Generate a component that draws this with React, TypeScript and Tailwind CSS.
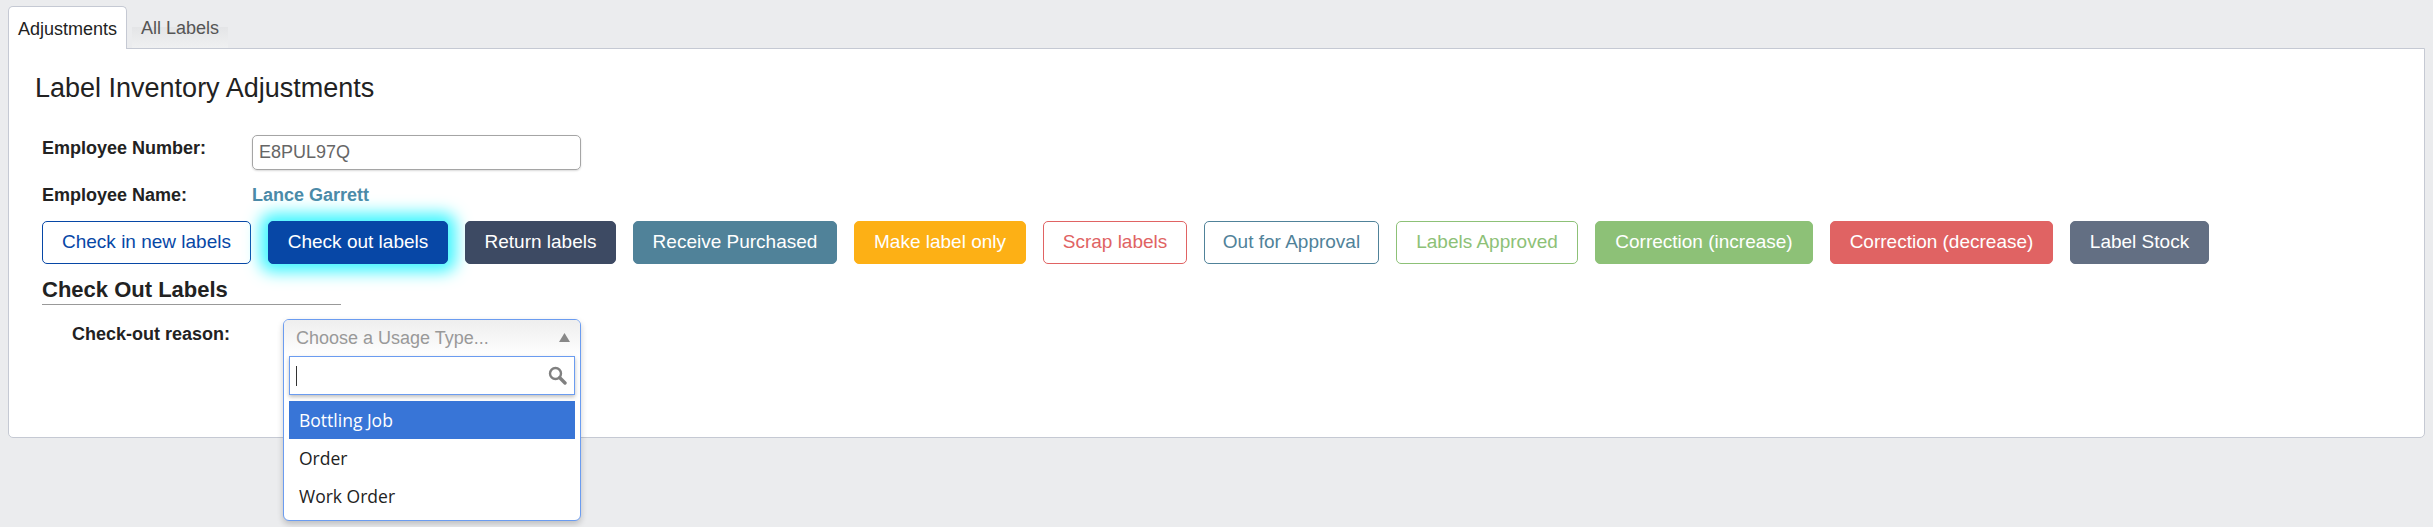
const sans = "font-['Liberation_Sans',Arial,sans-serif]";

const actions = [
  { label: 'Check in new labels', className: 'w-[209px] border-[#0747a6] bg-white text-[#0747a6]' },
  { label: 'Check out labels', className: 'w-[180px] border-[#0747a6] bg-[#0747a6] text-white shadow-[0_0_16px_8px_#40f6ff]' },
  { label: 'Return labels', className: 'w-[151px] border-[#3d4a63] bg-[#3d4a63] text-white' },
  { label: 'Receive Purchased', className: 'w-[204px] border-[#508299] bg-[#508299] text-white' },
  { label: 'Make label only', className: 'w-[172px] border-[#fdb015] bg-[#fdb015] text-white' },
  { label: 'Scrap labels', className: 'w-[144px] border-[#e06363] bg-white text-[#e06363]' },
  { label: 'Out for Approval', className: 'w-[175px] border-[#508299] bg-white text-[#508299]' },
  { label: 'Labels Approved', className: 'w-[182px] border-[#8dc177] bg-white text-[#8dc177]' },
  { label: 'Correction (increase)', className: 'w-[218px] border-[#8dc177] bg-[#8dc177] text-white' },
  { label: 'Correction (decrease)', className: 'w-[223px] border-[#e06363] bg-[#e06363] text-white' },
  { label: 'Label Stock', className: 'w-[139px] border-[#636f83] bg-[#636f83] text-white' },
];

const options = ['Bottling Job', 'Order', 'Work Order'];

const UsageSelect = () => (
  <div className="absolute left-[241px] top-[-2px] z-10 h-[202px] w-[298px] rounded-[6px] border border-[#6b9cf0] bg-white shadow-[0_3px_6px_rgba(0,0,0,0.2)]">
    <div className="flex h-[36px] items-center justify-between rounded-t-[5px] bg-gradient-to-b from-[#eeeeee] to-white pl-[12px] pr-[10px] text-[18px] text-[#999999]">
      <span>Choose a Usage Type...</span>
      <svg width="11" height="9" viewBox="0 0 11 9" className="mb-[2px]">
        <path d="M5.5 0 L11 9 L0 9 Z" fill="#888888" />
      </svg>
    </div>
    <div className="px-[5px]">
      <div className="flex h-[39px] items-center justify-between border border-[#6b9cf0] bg-white pl-[6px] pr-[7px] shadow-[0_2px_4px_rgba(0,0,0,0.25)]">
        <span className="h-[20px] w-[1px] bg-[#333333]" />
        <svg width="19" height="19" viewBox="0 0 19 19" fill="none" stroke="#808080">
          <circle cx="7.5" cy="7.5" r="5.5" strokeWidth="2.4" />
          <path d="M11.8 11.8 L17 17" strokeWidth="3.4" strokeLinecap="round" />
        </svg>
      </div>
      <ul className="mt-[6px] font-['Open_Sans',sans-serif] text-[17.5px] text-[#222222]">
        {options.map((option, i) => (
          <li
            key={option}
            className={`flex h-[38px] items-center pl-[10px] ${i === 0 ? 'bg-[#3875d7] text-white' : ''}`}
          >
            {option}
          </li>
        ))}
      </ul>
    </div>
  </div>
);

export default function App() {
  return (
    <div className={`h-[527px] overflow-hidden bg-[#ebecee] pl-[8px] pr-[8px] pt-[6px] ${sans} text-[#222222]`}>
      <nav className="relative z-10 flex h-[42px] text-[18px]">
        <div className="h-[43px] w-[119px] rounded-t-[5px] border border-b-0 border-[#c5c9d3] bg-white pl-[9px] pt-[9px]">
          Adjustments
        </div>
        <div className="ml-[5px] h-[42px] w-[96px] bg-[linear-gradient(to_bottom,transparent_49%,#e4e5e7_50%,#eff0f1_100%)] pl-[9px] pt-[9px] text-[#555555]">
          All Labels
        </div>
      </nav>

      <section className="relative h-[390px] rounded-b-[5px] border border-[#c5c9d3] bg-white pl-[33px] pt-[24px]">
        <h1 className="-ml-[7px] text-[27px] leading-[30px] text-[#222222]">Label Inventory Adjustments</h1>

        <div className="mt-[32px] flex h-[35px] items-start text-[18px] font-bold">
          <span className="w-[210px]">Employee Number:</span>
          <div className="flex h-[35px] w-[329px] items-center rounded-[5px] border border-[#a5a5a5] pl-[6px] font-normal text-[#666666] shadow-[0_1px_2px_rgba(0,0,0,0.15)]">
            E8PUL97Q
          </div>
        </div>

        <div className="mt-[12px] flex text-[18px] font-bold">
          <span className="w-[210px]">Employee Name:</span>
          <span className="text-[#4b8aa8]">Lance Garrett</span>
        </div>

        <div className="mt-[12px] flex gap-[17px]">
          {actions.map((action) => (
            <button
              key={action.label}
              type="button"
              className={`h-[43px] rounded-[5px] border text-[19px] ${action.className}`}
            >
              {action.label}
            </button>
          ))}
        </div>

        <h2 className="mt-[14px] w-[299px] border-b border-[#999999] pb-[2px] text-[22px] font-bold leading-[24px]">
          Check Out Labels
        </h2>

        <div className="relative mt-[16px] pl-[30px] text-[18px] font-bold">
          Check-out reason:
          <div className="font-normal">
            <UsageSelect />
          </div>
        </div>
      </section>
    </div>
  );
}
